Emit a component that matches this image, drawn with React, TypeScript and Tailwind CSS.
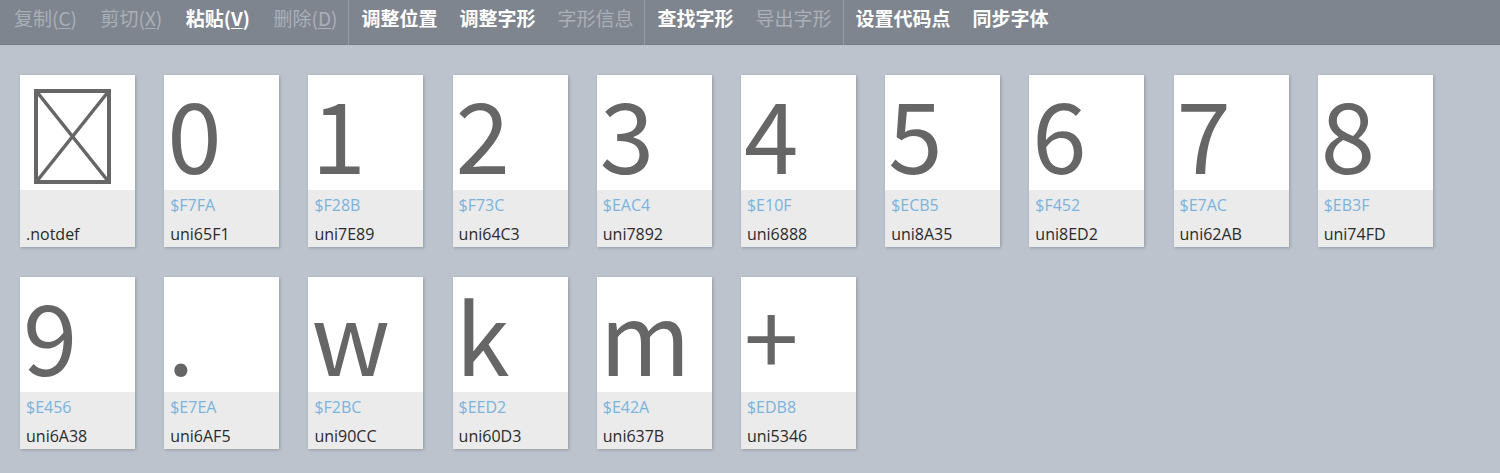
import React from "react";

type Item = { label: string; key?: string; on: boolean };

const groups: Item[][] = [
  [
    { label: "复制", key: "C", on: false },
    { label: "剪切", key: "X", on: false },
    { label: "粘贴", key: "V", on: true },
    { label: "删除", key: "D", on: false },
  ],
  [
    { label: "调整位置", on: true },
    { label: "调整字形", on: true },
    { label: "字形信息", on: false },
  ],
  [
    { label: "查找字形", on: true },
    { label: "导出字形", on: false },
  ],
  [
    { label: "设置代码点", on: true },
    { label: "同步字体", on: true },
  ],
];

const glyphs: [string, string, string][] = [
  ["0", "$F7FA", "uni65F1"],
  ["1", "$F28B", "uni7E89"],
  ["2", "$F73C", "uni64C3"],
  ["3", "$EAC4", "uni7892"],
  ["4", "$E10F", "uni6888"],
  ["5", "$ECB5", "uni8A35"],
  ["6", "$F452", "uni8ED2"],
  ["7", "$E7AC", "uni62AB"],
  ["8", "$EB3F", "uni74FD"],
  ["9", "$E456", "uni6A38"],
  [".", "$E7EA", "uni6AF5"],
  ["w", "$F2BC", "uni90CC"],
  ["k", "$EED2", "uni60D3"],
  ["m", "$E42A", "uni637B"],
  ["+", "$EDB8", "uni5346"],
];

function ToolItem({ it }: { it: Item }) {
  return (
    <span
      className={
        it.on
          ? "text-white font-bold whitespace-nowrap"
          : "text-[#aab0b8] whitespace-nowrap"
      }
    >
      {it.label}
      {it.key && (
        <>
          (<span className="underline underline-offset-2">{it.key}</span>)
        </>
      )}
    </span>
  );
}

function Card({
  glyph,
  code,
  name,
  notdef,
}: {
  glyph?: string;
  code?: string;
  name: string;
  notdef?: boolean;
}) {
  return (
    <div className="w-[115px] h-[172px] bg-white shadow-[1px_1px_3px_rgba(0,0,0,0.22)] flex flex-col overflow-hidden">
      <div className="h-[115px] bg-white overflow-hidden">
        {notdef ? (
          <svg width="115" height="115" viewBox="0 0 115 115">
            <g stroke="#666666" fill="none">
              <rect x="16" y="16" width="73" height="91" strokeWidth="4" />
              <line x1="17" y1="17" x2="88" y2="106" strokeWidth="3.5" />
              <line x1="88" y1="17" x2="17" y2="106" strokeWidth="3.5" />
            </g>
          </svg>
        ) : (
          <div className="pl-[3px] pt-[6px] text-[98px] leading-[100px] font-normal text-[#666666] font-['Noto_Sans_CJK_SC',sans-serif]">
            {glyph}
          </div>
        )}
      </div>
      <div className="h-[57px] bg-[#ebebeb] pl-[6px] text-[16px] font-['Open_Sans',sans-serif]">
        <div className="h-[30px] leading-[30px] text-[#7ab3dd]">{code ?? ""}</div>
        <div className="pt-[1px] leading-[26px] text-[#2a2a2a]">{name}</div>
      </div>
    </div>
  );
}

export default function App() {
  return (
    <div className="w-[1500px] h-[473px] bg-[#bcc3cd] overflow-hidden font-['Noto_Sans_CJK_SC',sans-serif]">
      <div className="h-[45px] bg-[#7f858f] border-b border-[#767c86] flex pl-[14px] text-[19px] leading-[36px]">
        {groups.map((g, gi) => (
          <div key={gi} className="flex">
            {gi > 0 && <div className="w-px h-[45px] bg-[#959aa2] ml-[11px] mr-[12px]" />}
            <div className={gi === 0 ? "flex gap-[23.5px]" : "flex gap-[22px]"}>
              {g.map((it, i) => (
                <ToolItem key={i} it={it} />
              ))}
            </div>
          </div>
        ))}
      </div>
      <div className="flex flex-wrap gap-x-[29.2px] gap-y-[30px] pl-[20px] pt-[30px]">
        <Card notdef name=".notdef" />
        {glyphs.map(([g, c, n]) => (
          <Card key={n} glyph={g} code={c} name={n} />
        ))}
      </div>
    </div>
  );
}
